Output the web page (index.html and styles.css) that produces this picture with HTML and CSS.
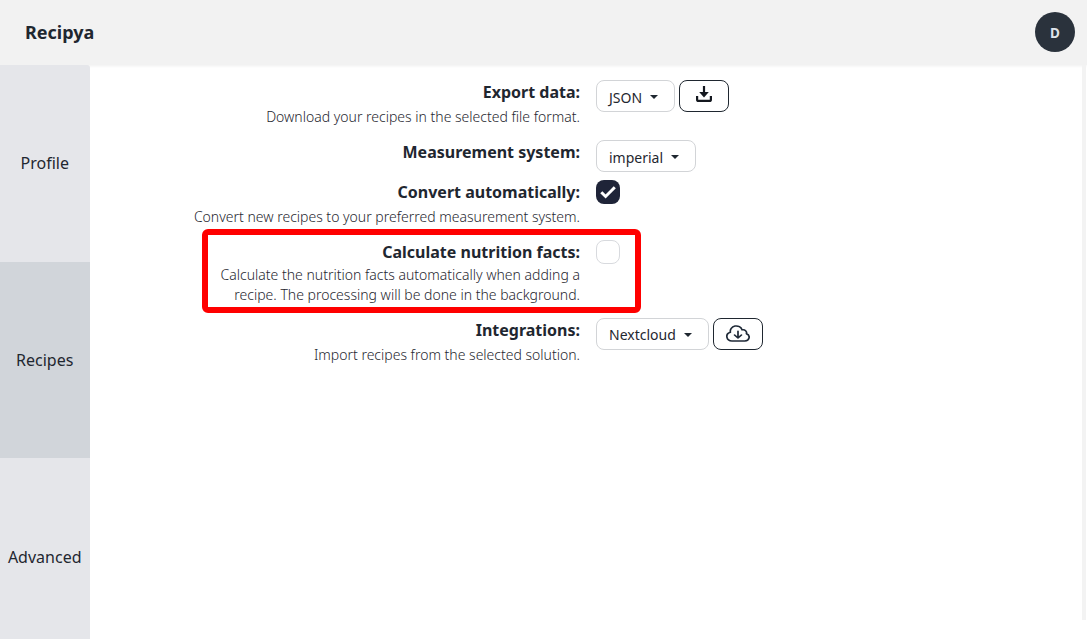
FILE: index.html
```html
<!DOCTYPE html>
<html lang="en">
<head>
<meta charset="utf-8">
<title>Recipya</title>
<link rel="stylesheet" href="styles.css">
</head>
<body>
<header class="navbar">
  <a class="brand">Recipya</a>
  <div class="avatar">D</div>
</header>
<div class="layout">
  <nav class="tabs">
    <a class="tab">Profile</a>
    <a class="tab tab-active">Recipes</a>
    <a class="tab">Advanced</a>
  </nav>
  <main class="settings">
    <section class="row">
      <div class="text">
        <div class="label">Export data:</div>
        <p class="desc">Download your recipes in the selected file format.</p>
      </div>
      <div class="controls">
        <div class="select select-json">JSON<span class="caret"></span></div>
        <button class="button">
          <svg class="icon-download" viewBox="0 0 16 17" width="16" height="17" fill="none" stroke="#14181f" stroke-width="2.2"><path d="M1.1 10v3.4c0 1 .5 1.5 1.5 1.5h10.8c1 0 1.5-.5 1.5-1.5V10"/><path d="M8 0v8"/><path d="M3.2 6h9.6L8 11.5z" fill="#14181f" stroke="none"/></svg>
        </button>
      </div>
    </section>
    <section class="row row-measure">
      <div class="text"><div class="label">Measurement system:</div></div>
      <div class="controls"><div class="select select-measure">imperial<span class="caret"></span></div></div>
    </section>
    <section class="row">
      <div class="text">
        <div class="label">Convert automatically:</div>
        <p class="desc">Convert new recipes to your preferred measurement system.</p>
      </div>
      <div class="controls">
        <span class="checkbox checkbox-on"><svg viewBox="0 0 24 24" width="24" height="24" fill="none" stroke="#fff" stroke-width="3"><path d="M5.3 12.2l4.3 4.3 9.2-9.2"/></svg></span>
      </div>
    </section>
    <section class="row">
      <div class="text">
        <div class="label">Calculate nutrition facts:</div>
        <p class="desc desc-tight">Calculate the nutrition facts automatically when adding a<br>recipe. The processing will be done in the background.</p>
      </div>
      <div class="controls"><span class="checkbox"></span></div>
      <div class="highlight"></div>
    </section>
    <section class="row">
      <div class="text">
        <div class="label">Integrations:</div>
        <p class="desc">Import recipes from the selected solution.</p>
      </div>
      <div class="controls">
        <div class="select select-cloud">Nextcloud<span class="caret"></span></div>
        <button class="button">
          <svg class="icon-cloud" viewBox="1.5 3.5 21 17" width="24" height="17" preserveAspectRatio="none" fill="none" stroke="#1f2937" stroke-width="1.5" stroke-linecap="round" stroke-linejoin="round"><path d="M12 9.75v6.75m0 0-3-3m3 3 3-3m-8.25 6a4.5 4.5 0 0 1-1.41-8.775 5.25 5.25 0 0 1 10.233-2.33 3 3 0 0 1 3.758 3.848A3.752 3.752 0 0 1 18 19.5H6.75Z"/></svg>
        </button>
      </div>
    </section>
  </main>
  <div class="scroll-track"></div>
</div>
</body>
</html>
```
FILE: styles.css
```css
* { box-sizing: border-box; }
body {
  margin: 0;
  height: 639px;
  overflow: hidden;
  background: #fff;
  color: #1f2730;
  font: 16px/24px "Noto Sans", sans-serif;
}
.navbar {
  height: 65px;
  padding: 0 12px 0 25px;
  display: flex;
  align-items: center;
  justify-content: space-between;
  background: #f2f2f2;
  box-shadow: 0 1px 3px #00000010;
}
.brand { font-size: 18px; font-weight: 700; margin-bottom: 2px; }
.avatar {
  width: 40px;
  height: 40px;
  border-radius: 50%;
  margin-bottom: 2px;
  background: #2a323c;
  color: #dfe4ea;
  font-size: 13.5px;
  font-weight: 700;
  line-height: 42px;
  text-align: center;
}
.layout { display: flex; height: 574px; }
.tabs { width: 90px; flex: none; }
.tab {
  display: flex;
  height: 196.67px;
  padding-bottom: 0.6px;
  padding-right: 0.6px;
  align-items: center;
  justify-content: center;
  background: #e5e6ea;
}
.tab:first-child { border-top-right-radius: 3px; }
.tab:last-child { padding-bottom: 0; padding-top: 0.4px; }
.tab-active { background: #d1d5da; }
.settings {
  flex: 1;
  padding-top: 15px;
  display: flex;
  flex-direction: column;
  gap: 8px;
}
.row { display: grid; grid-template-columns: 490px 1fr; column-gap: 16px; position: relative; }
.text { text-align: right; }
.label { font-weight: 700; }
.desc {
  margin: 3px 0 5px;
  font-size: 14px;
  line-height: 20px;
  font-weight: 300;
}
.desc-tight { margin: 1px 0 5px; }
.controls { display: flex; gap: 4px; align-items: flex-start; height: 24px; }
.row-measure .controls { height: 32px; }
.select, .button {
  height: 32px;
  flex: none;
  border: 1px solid #d2d4d7;
  border-radius: 8px;
  background: #fff;
}
.select {
  display: flex;
  align-items: center;
  justify-content: space-between;
  padding: 3px 16px 0 12px;
  font-size: 14px;
}
.select-json { width: 79px; }
.select-measure { width: 100px; }
.select-cloud { width: 113px; padding-top: 1px; }
.caret {
  margin-bottom: 2px;
  border: 4.5px solid transparent;
  border-top: 4px solid #1f2730;
  border-bottom: 0;
}
.select-cloud .caret { margin-bottom: 0; }
.button {
  width: 50px;
  padding: 0;
  display: flex;
  align-items: center;
  justify-content: center;
  border-color: #1f2730;
}
.icon-download { margin-bottom: 3px; }
.icon-cloud { margin-bottom: 1px; }
.checkbox {
  width: 24px;
  height: 24px;
  border: 1px solid #d8dade;
  border-radius: 8px;
}
.checkbox-on { border: 0; background: #1f2438; }
.checkbox svg { display: block; }
.highlight {
  position: absolute;
  left: 112px;
  top: -11px;
  width: 439px;
  height: 84px;
  border: 6px solid #f00;
  border-radius: 6px;
}
.scroll-track { width: 4px; height: 555px; margin-right: 1px; background: #f3f3f3; }
```
